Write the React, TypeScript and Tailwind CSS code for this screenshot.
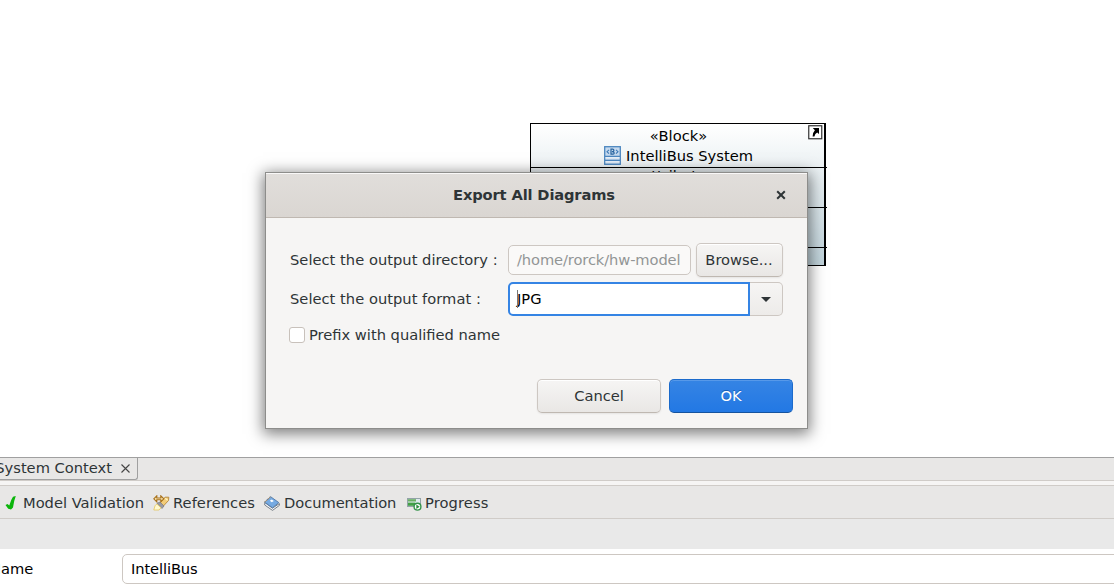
import React from "react";

function BlockIcon() {
  return (
    <svg width="17" height="19" viewBox="0 0 17 19" className="-mt-px shrink-0">
      <rect x="0.7" y="0.7" width="15.6" height="17.6" fill="#c5d9ee" stroke="#4c86bf" strokeWidth="1.3" />
      <path d="M1 10.3H16M1 14.3H16" stroke="#4c86bf" strokeWidth="1.3" />
      <path d="M1.5 11.8H15.5M1.5 15.8H15.5" stroke="#f4f8fc" strokeWidth="1.2" />
      <path d="M5 3.8L3 5.7L5 7.6M12 3.8L14 5.7L12 7.6" fill="none" stroke="#3f7cb8" strokeWidth="1.1" />
      <path d="M7 3.2V8.2H9Q10.2 8 10.2 6.9Q10.2 5.8 8 5.7Q9.9 5.5 9.9 4.4Q9.8 3.2 8.8 3.2Z" fill="none" stroke="#28649f" strokeWidth="1.2" />
    </svg>
  );
}

function LinkIcon() {
  return (
    <svg width="15" height="15" viewBox="0 0 15 15" className="absolute right-px top-[1px]">
      <rect x="0.75" y="0.75" width="13" height="13" fill="#fff" stroke="#333" strokeWidth="1.2" />
      <path d="M4.8 3H11V9L9.2 7.4Q7 8.5 6.4 11.6H4.6Q4 8.4 6.9 5.2Z" fill="#000" />
    </svg>
  );
}

function CheckIcon() {
  return (
    <svg width="12" height="14" viewBox="0 0 12 14" className="shrink-0">
      <path d="M0.5 9L2.5 8L4.3 9.6Q6 3.5 8 0.8L10.8 0Q8.8 5 8 11.5L6 13.5L3.2 12.8Z" fill="#0bb50b" />
    </svg>
  );
}

function ReferencesIcon() {
  return (
    <svg width="17" height="16" viewBox="0 0 17 16" className="shrink-0">
      <path d="M7 8L12 2.2L15.8 2.2L15.5 5.5L9.5 12Z" fill="#f3cc78" stroke="#b58738" strokeWidth="0.9" />
      <path d="M12.2 3.2L14.6 5.2" stroke="#fff2c1" strokeWidth="1.3" />
      <path d="M0.8 3.8L3.8 0.8V3H7.8V0.8L10.8 3.8L7.8 6.8V4.8H3.8V6.8Z" fill="#fbe6b4" stroke="#a7711a" strokeWidth="1.1" />
      <path d="M4 8.3L7 7L11 11L9 13.5Z" fill="#9a9aa2" stroke="#77777f" strokeWidth="0.7" />
      <path d="M3.8 9L8 12.8L6 15H0.8L2 10.8Z" fill="#fff9d0" stroke="#e4c65a" strokeWidth="0.8" />
    </svg>
  );
}

function BookIcon() {
  return (
    <svg width="16" height="15" viewBox="0 0 16 15" className="shrink-0">
      <path d="M0.8 6.5L8.4 12.2L15.4 7.6V9.4L8.5 14.4L0.7 9Z" fill="#f5f7fa" stroke="#6b747e" strokeWidth="0.9" />
      <path d="M0.6 6.2L6.6 0.7L14.8 6.6L8.5 11.8Z" fill="#76aae2" stroke="#5079a8" strokeWidth="0.9" />
      <path d="M0.6 6.2L6.6 0.7" stroke="#b0916b" strokeWidth="1.2" strokeDasharray="1.2 1" />
      <path d="M5.8 4.8L7.8 3.6L9.8 4.9L7.8 6.2Z" fill="#fff" />
    </svg>
  );
}

function ProgressIcon() {
  return (
    <svg width="15" height="14" viewBox="0 0 15 14" className="mt-px shrink-0">
      <rect x="0.5" y="1.5" width="13" height="8" fill="#dfe9ee" stroke="#93a3a8" />
      <rect x="1" y="2.2" width="8" height="2.3" fill="#6bb064" />
      <rect x="1" y="5.6" width="7" height="3.2" fill="#43a045" />
      <circle cx="10.5" cy="9.7" r="3.4" fill="#fff" stroke="#34944a" strokeWidth="1.4" />
      <path d="M9.3 7.5L12.7 9.7L9.3 11.9Z" fill="#2f8f40" />
    </svg>
  );
}

function DiagramBlock() {
  return (
    <div className="absolute left-[530px] top-[123px] flex h-[143px] w-[296px] flex-col border border-r-2 border-black bg-linear-to-b from-white to-[#bfd2da] text-center text-black">
      <div className="-mr-px h-[43px] shrink-0 pl-px pt-[2px] leading-[20px]">
        <div>«Block»</div>
        <div className="flex items-center justify-center gap-[5px]">
          <BlockIcon />
          <span>IntelliBus System</span>
        </div>
      </div>
      <div className="-mr-[3px] h-[40px] shrink-0 border-t border-black pr-[2px] pt-px leading-[14px]">attributes</div>
      <div className="-mr-[3px] h-[40px] shrink-0 border-t border-black" />
      <div className="-mr-[3px] flex-1 border-t border-black" />
      <LinkIcon />
    </div>
  );
}

const button =
  "flex shrink-0 items-center justify-center rounded-[5px] border border-[#cdc7c2] border-b-[#bfb8b1] bg-linear-to-b from-[#f6f5f4] to-[#e9e7e5] shadow-[inset_0_1px_#ffffff,0_1px_2px_rgba(0,0,0,0.07)]";

function ExportDialog() {
  return (
    <div className="absolute left-[265px] top-[172px] flex h-[257px] w-[543px] flex-col border border-[#8d8d8b] bg-[#f6f5f4] text-[#2e3436] shadow-[0_3px_14px_2px_rgba(0,0,0,0.5)]">
      <div className="grid h-[45px] shrink-0 grid-cols-[50px_1fr_50px] items-center border-b border-[#bfb8b1] bg-linear-to-b from-[#e1dedb] to-[#dad6d2] shadow-[inset_0_1px_#f9f8f8]">
        <span />
        <span className="pr-[5px] text-center font-bold tracking-[-0.14px]">Export All Diagrams</span>
        <svg width="10" height="10" viewBox="0 0 10 10" className="ml-[19px]">
          <path d="M1.2 1.2L8.8 8.8M8.8 1.2L1.2 8.8" stroke="#2e3436" strokeWidth="2" />
        </svg>
      </div>
      <div className="flex flex-col pl-[23px] pr-[24px] pt-[25px]">
        <div className="flex h-[34px] items-center">
          <span className="w-[219px] shrink-0 whitespace-nowrap pl-px tracking-[0.03px]">Select the output directory :</span>
          <div className="flex h-[30px] w-[183px] items-center rounded-[5px] border border-[#cdc7c2] bg-[#faf9f8] pl-[8px] tracking-[-0.1px] text-[#929595]">/home/rorck/hw-model</div>
          <div className={button + " ml-[5px] h-[34px] w-[87px] pr-px"}>Browse...</div>
        </div>
        <div className="mt-[5px] flex h-[34px] items-center">
          <span className="w-[219px] shrink-0 whitespace-nowrap pl-px tracking-[0.03px]">Select the output format :</span>
          <div className="relative flex h-[34px] w-[242px] items-center rounded-l-[5px] border-2 border-[#3584e4] bg-white pl-[7px] text-black">
            JPG
            <span className="absolute left-[7px] top-[6px] h-[18px] w-px bg-[#777]" />
          </div>
          <div className="flex h-[34px] w-[33px] items-center justify-center rounded-r-[5px] border border-l-0 border-[#cdc7c2] bg-linear-to-b from-[#f6f5f4] to-[#edebe9]">
            <svg width="10" height="5" viewBox="0 0 10 5"><path d="M0 0H10L5 5Z" fill="#2e3436" /></svg>
          </div>
        </div>
        <div className="mt-[10px] flex h-[18px] items-center">
          <span className="h-[16px] w-[16px] rounded-[3px] border border-[#c8c1bb] bg-white" />
          <span className="ml-[4px]">Prefix with qualified name</span>
        </div>
      </div>
      <div className="mt-auto flex justify-end gap-[8px] pb-[15px] pr-[14px]">
        <div className={button + " h-[34px] w-[124px]"}>Cancel</div>
        <div className="flex h-[34px] w-[124px] items-center justify-center rounded-[5px] border border-[#1b6acb] border-b-[#15539e] bg-linear-to-b from-[#3584e4] to-[#2278e4] text-white shadow-[inset_0_1px_#5799e9] [text-shadow:0_-1px_#1a5fb4]">OK</div>
      </div>
    </div>
  );
}

export default function App() {
  return (
    <div className="flex h-[586px] w-[1114px] flex-col overflow-hidden bg-white font-['DejaVu_Sans',sans-serif] text-[14.667px] leading-[20px] text-[#2e3436]">
      <div className="relative z-10 h-[457px] shrink-0">
        <DiagramBlock />
        <ExportDialog />
      </div>
      <div className="h-[24px] shrink-0 border-b border-t border-b-[#d0ccc8] border-t-[#a0a0a0] bg-[#e8e7e6]">
        <div className="flex h-[22px] w-[138px] items-center justify-end rounded-br-[3px] border-b border-r border-[#a0a0a0] pr-[7px]">
          <span className="-mt-[2px] whitespace-nowrap">System Context</span>
          <svg width="9" height="9" viewBox="0 0 9 9" className="ml-[9px] shrink-0">
            <path d="M0.5 0.5L8.5 8.5M8.5 0.5L0.5 8.5" stroke="#444" strokeWidth="1.1" />
          </svg>
        </div>
      </div>
      <div className="h-[4px] shrink-0 bg-[#f6f5f4]" />
      <div className="flex h-[34px] shrink-0 items-center border-b border-t border-[#d0ccc8] bg-[#e8e7e6] pl-[5px] pt-[2px]">
        <CheckIcon />
        <span className="ml-[6px] w-[130px] whitespace-nowrap">Model Validation</span>
        <ReferencesIcon />
        <span className="ml-[3px] w-[91px] whitespace-nowrap tracking-[0.05px]">References</span>
        <BookIcon />
        <span className="ml-[4px] w-[123px] whitespace-nowrap tracking-[-0.05px]">Documentation</span>
        <ProgressIcon />
        <span className="ml-[3px] tracking-[0.12px]">Progress</span>
      </div>
      <div className="h-[30px] shrink-0 bg-[#e9e9e9]" />
      <div className="flex flex-1 items-start pt-[5px] text-black">
        <div className="flex h-[30px] w-[122px] shrink-0 items-center"><span className="-ml-[10px]">Name</span></div>
        <div className="-mr-[8px] flex h-[30px] flex-1 items-center rounded-[5px] border border-[#cdc7c2] pl-[8px] tracking-[-0.1px]">IntelliBus</div>
      </div>
    </div>
  );
}
